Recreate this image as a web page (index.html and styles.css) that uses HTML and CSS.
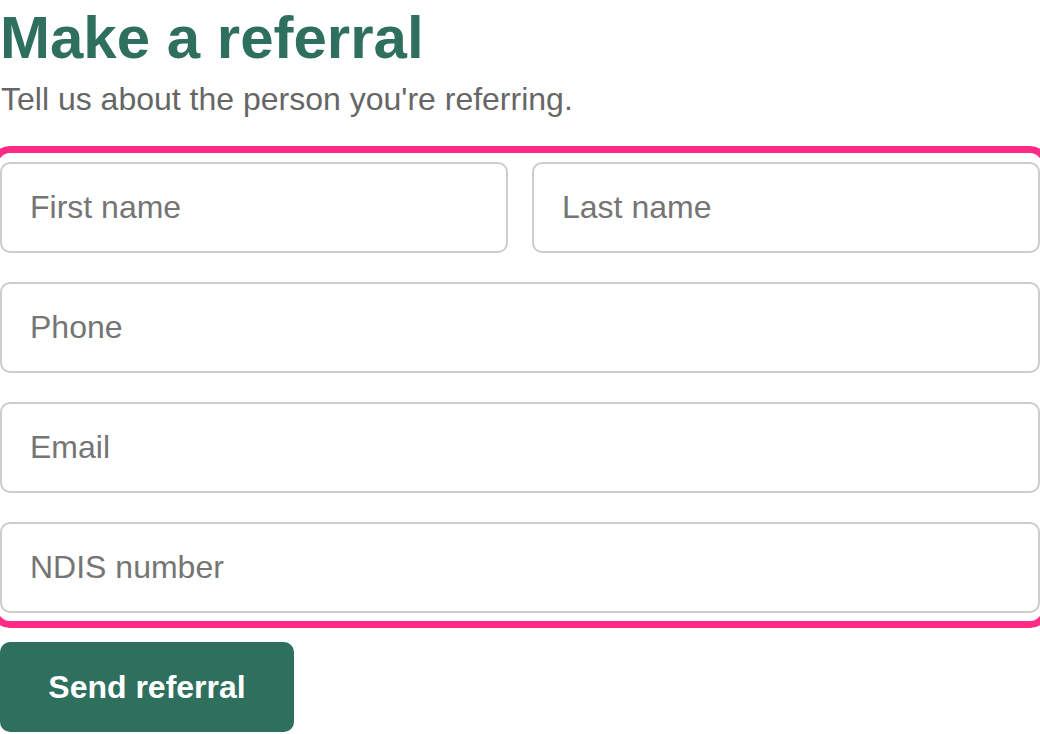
FILE: index.html
```html
<!DOCTYPE html>
<html lang="en">
<head>
<meta charset="utf-8">
<title>Make a referral</title>
<link rel="stylesheet" href="styles.css">
</head>
<body>
<main class="page">
  <h1 class="title">Make a referral</h1>
  <p class="lead">Tell us about the person you're referring.</p>
  <form class="referral-form">
    <div class="fields">
      <div class="name-row">
        <input class="field" type="text" placeholder="First name">
        <input class="field" type="text" placeholder="Last name">
      </div>
      <input class="field" type="tel" placeholder="Phone">
      <input class="field" type="email" placeholder="Email">
      <input class="field" type="text" placeholder="NDIS number">
    </div>
  </form>
  <button class="submit" type="button">Send referral</button>
</main>
</body>
</html>
```

FILE: styles.css
```css
html, body {
  margin: 0;
  padding: 0;
  background: #ffffff;
  overflow: hidden;
}

body {
  font-family: "Liberation Sans", Arial, Helvetica, sans-serif;
}

.page {
  display: flex;
  flex-direction: column;
  align-items: stretch;
}

.title {
  margin: 0;
  padding-top: 3px;
  font-size: 60px;
  line-height: normal;
  font-weight: 700;
  color: #2e6f5e;
}

.lead {
  margin: 9px 0 0 1px;
  font-size: 32px;
  line-height: normal;
  color: #666666;
}

.referral-form {
  margin-top: 37px;
  padding: 7px 0 6px;
  border-radius: 10px;
  outline: 7px solid #ff2a86;
  outline-offset: 2px;
}

.fields {
  display: flex;
  flex-direction: column;
  gap: 29px;
}

.name-row {
  display: grid;
  grid-template-columns: 1fr 1fr;
  gap: 24px;
}

.field {
  box-sizing: border-box;
  width: 100%;
  height: 91px;
  margin: 0;
  padding: 0 28px;
  border: 2px solid #cccccc;
  border-radius: 10px;
  background: #ffffff;
  font-family: "Liberation Sans", Arial, Helvetica, sans-serif;
  font-size: 32px;
  color: #333333;
}

.field::placeholder {
  color: #757575;
  opacity: 1;
}

.submit {
  align-self: flex-start;
  box-sizing: border-box;
  width: 294px;
  height: 90px;
  margin-top: 23px;
  padding: 0 40px;
  border: none;
  border-radius: 10px;
  background: #2e6f5e;
  color: #ffffff;
  font-family: "Liberation Sans", Arial, Helvetica, sans-serif;
  font-size: 32px;
  font-weight: 700;
  cursor: pointer;
}
```
